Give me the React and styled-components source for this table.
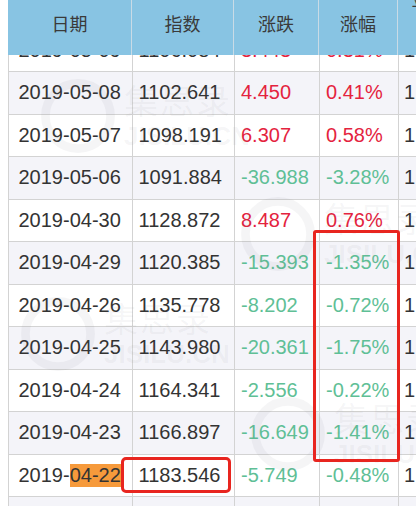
import React from "react";
import styled, { createGlobalStyle } from "styled-components";

const Global = createGlobalStyle`
  html, body { margin: 0; padding: 0; background: #fff; }
  body { font-family: "Liberation Sans", "Noto Sans CJK SC", sans-serif; }
`;

const COLS = "124px 102px 85px 79px 100px";

const Frame = styled.div`
  position: relative;
  width: 416px;
  height: 506px;
  overflow: hidden;
  background: #fff;
`;

const Body = styled.div`
  padding-top: 29.7px;
  margin-left: 8px;
  border-left: 1px solid #d3d3d3;
  width: 490px;
`;

const Row = styled.div`
  display: grid;
  grid-template-columns: ${COLS};
  height: 42.5px;
  background: ${(p) => (p.$striped ? "#f4f4f9" : "#fff")};
`;

const Cell = styled.div`
  box-sizing: border-box;
  display: flex;
  align-items: center;
  padding-left: ${(p) => p.$pad}px;
  border-right: 1px solid #d3d3d3;
  border-bottom: 1px solid #d3d3d3;
  font-size: 20px;
  white-space: nowrap;
  color: ${(p) =>
    p.$tone === "up" ? "#e4233e" : p.$tone === "down" ? "#5fbf96" : "#333"};
`;

const Mark = styled.span`
  background: #f69a3b;
`;

const Header = styled.div`
  position: absolute;
  top: 0;
  left: 8px;
  z-index: 3;
  display: grid;
  grid-template-columns: ${COLS};
  height: 54.5px;
  background: #88c4e3;
`;

const HeadCell = styled.div`
  box-sizing: border-box;
  display: flex;
  align-items: center;
  justify-content: center;
  text-align: center;
  padding-bottom: 8px;
  border-right: 1px solid #c9dbe6;
  font-family: "Noto Sans CJK SC", "Liberation Sans", sans-serif;
  font-size: 18px;
  line-height: ${(p) => (p.$tight ? "19px" : "normal")};
  color: #3a3a3a;
  overflow: hidden;
`;

const HeadStack = styled.span`
  display: block;
  width: 88px;
  margin-left: 0;
`;

const Annotation = styled.div`
  position: absolute;
  z-index: 4;
  box-sizing: border-box;
  border: 3px solid #e8251f;
  border-radius: ${(p) => p.$r}px;
  pointer-events: none;
`;

const Watermark = styled.div`
  position: absolute;
  z-index: 1;
  pointer-events: none;
  color: rgba(120, 120, 130, 0.07);
  font-family: "Noto Sans CJK SC", "Liberation Sans", sans-serif;
  display: flex;
  align-items: center;
  gap: 8px;
`;

const WmText = styled.div`
  display: flex;
  flex-direction: column;
  line-height: 1;
`;

const WmCn = styled.span`
  font-size: 34px;
  letter-spacing: 2px;
`;

const WmEn = styled.span`
  font-family: "Liberation Sans", sans-serif;
  font-size: 26px;
  font-weight: bold;
  margin-top: 6px;
`;

const rows = [
  ["2019-05-09", "1106.084", "3.443", "0.31%", "1.106", "up"],
  ["2019-05-08", "1102.641", "4.450", "0.41%", "1.102", "up"],
  ["2019-05-07", "1098.191", "6.307", "0.58%", "1.098", "up"],
  ["2019-05-06", "1091.884", "-36.988", "-3.28%", "1.091", "down"],
  ["2019-04-30", "1128.872", "8.487", "0.76%", "1.128", "up"],
  ["2019-04-29", "1120.385", "-15.393", "-1.35%", "1.120", "down"],
  ["2019-04-26", "1135.778", "-8.202", "-0.72%", "1.135", "down"],
  ["2019-04-25", "1143.980", "-20.361", "-1.75%", "1.143", "down"],
  ["2019-04-24", "1164.341", "-2.556", "-0.22%", "1.164", "down"],
  ["2019-04-23", "1166.897", "-16.649", "-1.41%", "1.166", "down"],
  ["2019-04-22", "1183.546", "-5.749", "-0.48%", "1.183", "down", true],
  ["2019-04-19", "1189.295", "2.114", "0.18%", "1.189", "up"],
];

function Logo({ size }) {
  return (
    <svg width={size} height={size} viewBox="0 0 70 70" fill="none">
      <circle cx="35" cy="35" r="30" stroke="currentColor" strokeWidth="8" />
    </svg>
  );
}

export default function App() {
  return (
    <Frame>
      <Global />
      <Header>
        <HeadCell>日期</HeadCell>
        <HeadCell>指数</HeadCell>
        <HeadCell>涨跌</HeadCell>
        <HeadCell>涨幅</HeadCell>
        <HeadCell $tight>
          <HeadStack>
            平均价格
            <br />
            溢价
            <br />
            率
          </HeadStack>
        </HeadCell>
      </Header>

      <Watermark style={{ left: 40, top: 78 }}>
        <Logo size={76} />
        <WmText>
          <WmCn>集思录</WmCn>
          <WmEn>JISILU.CN</WmEn>
        </WmText>
      </Watermark>
      <Watermark style={{ left: 240, top: 196 }}>
        <Logo size={76} />
        <WmText>
          <WmCn>集思录</WmCn>
          <WmEn>JISILU.CN</WmEn>
        </WmText>
      </Watermark>
      <Watermark style={{ left: 20, top: 296 }}>
        <Logo size={76} />
        <WmText>
          <WmCn>集思录</WmCn>
          <WmEn>JISILU.CN</WmEn>
        </WmText>
      </Watermark>
      <Watermark style={{ left: 250, top: 396 }}>
        <Logo size={76} />
        <WmText>
          <WmCn>集思录</WmCn>
          <WmEn>JISILU.CN</WmEn>
        </WmText>
      </Watermark>

      <Body>
        {rows.map(([date, idx, chg, pct, avg, tone, hl], i) => (
          <Row key={date} $striped={i % 2 === 1}>
            <Cell $pad={9.5}>
              {hl ? (
                <>
                  2019-<Mark>{date.slice(5)}</Mark>
                </>
              ) : (
                date
              )}
            </Cell>
            <Cell $pad={5.5}>{idx}</Cell>
            <Cell $pad={6} $tone={tone}>{chg}</Cell>
            <Cell $pad={6} $tone={tone}>{pct}</Cell>
            <Cell $pad={5}>{avg}</Cell>
          </Row>
        ))}
      </Body>

      <Annotation $r={3} style={{ left: 313, top: 230, width: 87, height: 232 }} />
      <Annotation $r={5} style={{ left: 121, top: 457, width: 110, height: 36 }} />
    </Frame>
  );
}
